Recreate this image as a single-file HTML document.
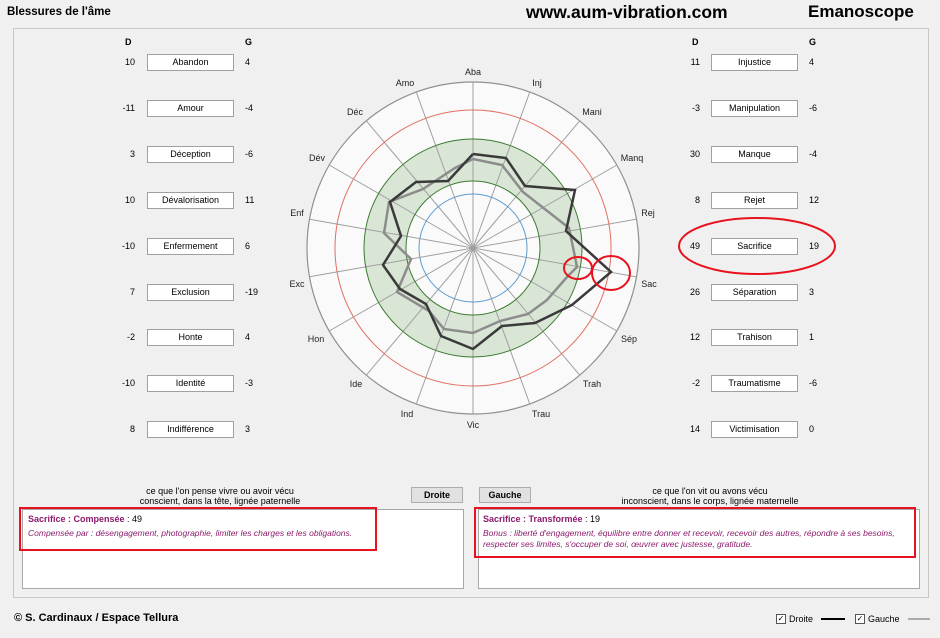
<!DOCTYPE html>
<html><head><meta charset="utf-8"><style>
*{margin:0;padding:0;box-sizing:border-box}
body{width:940px;height:638px;background:#f0f0f0;font-family:"Liberation Sans",Arial,sans-serif;color:#000;position:relative;overflow:hidden;font-size:9px}
.a{position:absolute;white-space:nowrap}
.b{font-weight:bold}
.box{position:absolute;width:87px;height:17px;background:#fff;border:1px solid #a0a0a0;text-align:center;line-height:15px;font-size:9px}
.dn{position:absolute;width:30px;text-align:right;font-size:9px}
.gn{position:absolute;font-size:9px}
.panel{position:absolute;left:13px;top:28px;width:916px;height:570px;border:1px solid #c8c8c8}
.ta{position:absolute;background:#fff;border:1px solid #a8a8a8}
.btn{position:absolute;height:16px;background:#e1e1e1;border:1px solid #adadad;font-size:9px;font-weight:bold;text-align:center;line-height:14px}
.red{position:absolute;border:2px solid #e8121e}
.p{color:#8b1a6b}
</style></head><body>
<div class="a b" style="left:7px;top:6px;font-size:11.5px">Blessures de l'âme</div>
<div class="a b" style="left:526px;top:2px;font-size:17.5px">www.aum-vibration.com</div>
<div class="a b" style="left:808px;top:2px;font-size:17px">Emanoscope</div>
<div class="panel"></div>

<div class="a b" style="left:125px;top:37px">D</div>
<div class="a b" style="left:245px;top:37px">G</div>
<div class="a b" style="left:692px;top:37px">D</div>
<div class="a b" style="left:809px;top:37px">G</div>

<div class="dn" style="left:105px;top:57px">10</div><div class="box" style="left:147px;top:54px">Abandon</div><div class="gn" style="left:245px;top:57px">4</div>
<div class="dn" style="left:105px;top:103px">-11</div><div class="box" style="left:147px;top:100px">Amour</div><div class="gn" style="left:245px;top:103px">-4</div>
<div class="dn" style="left:105px;top:149px">3</div><div class="box" style="left:147px;top:146px">Déception</div><div class="gn" style="left:245px;top:149px">-6</div>
<div class="dn" style="left:105px;top:195px">10</div><div class="box" style="left:147px;top:192px">Dévalorisation</div><div class="gn" style="left:245px;top:195px">11</div>
<div class="dn" style="left:105px;top:241px">-10</div><div class="box" style="left:147px;top:238px">Enfermement</div><div class="gn" style="left:245px;top:241px">6</div>
<div class="dn" style="left:105px;top:287px">7</div><div class="box" style="left:147px;top:284px">Exclusion</div><div class="gn" style="left:245px;top:287px">-19</div>
<div class="dn" style="left:105px;top:332px">-2</div><div class="box" style="left:147px;top:329px">Honte</div><div class="gn" style="left:245px;top:332px">4</div>
<div class="dn" style="left:105px;top:378px">-10</div><div class="box" style="left:147px;top:375px">Identité</div><div class="gn" style="left:245px;top:378px">-3</div>
<div class="dn" style="left:105px;top:424px">8</div><div class="box" style="left:147px;top:421px">Indifférence</div><div class="gn" style="left:245px;top:424px">3</div>

<div class="dn" style="left:670px;top:57px">11</div><div class="box" style="left:711px;top:54px">Injustice</div><div class="gn" style="left:809px;top:57px">4</div>
<div class="dn" style="left:670px;top:103px">-3</div><div class="box" style="left:711px;top:100px">Manipulation</div><div class="gn" style="left:809px;top:103px">-6</div>
<div class="dn" style="left:670px;top:149px">30</div><div class="box" style="left:711px;top:146px">Manque</div><div class="gn" style="left:809px;top:149px">-4</div>
<div class="dn" style="left:670px;top:195px">8</div><div class="box" style="left:711px;top:192px">Rejet</div><div class="gn" style="left:809px;top:195px">12</div>
<div class="dn" style="left:670px;top:241px">49</div><div class="box" style="left:711px;top:238px">Sacrifice</div><div class="gn" style="left:809px;top:241px">19</div>
<div class="dn" style="left:670px;top:287px">26</div><div class="box" style="left:711px;top:284px">Séparation</div><div class="gn" style="left:809px;top:287px">3</div>
<div class="dn" style="left:670px;top:332px">12</div><div class="box" style="left:711px;top:329px">Trahison</div><div class="gn" style="left:809px;top:332px">1</div>
<div class="dn" style="left:670px;top:378px">-2</div><div class="box" style="left:711px;top:375px">Traumatisme</div><div class="gn" style="left:809px;top:378px">-6</div>
<div class="dn" style="left:670px;top:424px">14</div><div class="box" style="left:711px;top:421px">Victimisation</div><div class="gn" style="left:809px;top:424px">0</div>

<svg class="a" style="left:0;top:0" width="940" height="638">
<ellipse cx="757" cy="246" rx="78" ry="28" fill="none" stroke="#e8121e" stroke-width="2"/>
<g transform="translate(473,248)">
<circle r="166" fill="#fafafa" stroke="#909090" stroke-width="1.2"/>
<circle r="109" fill="#d9e6d6"/>
<circle r="67" fill="#fafafa"/>
<g stroke="#a0a0a0" stroke-width="1">
<line x1="0" y1="0" x2="0" y2="-166"/><line x1="0" y1="0" x2="56.8" y2="-156"/><line x1="0" y1="0" x2="106.7" y2="-127.2"/><line x1="0" y1="0" x2="143.8" y2="-83"/><line x1="0" y1="0" x2="163.5" y2="-28.8"/><line x1="0" y1="0" x2="163.5" y2="28.8"/><line x1="0" y1="0" x2="143.8" y2="83"/><line x1="0" y1="0" x2="106.7" y2="127.2"/><line x1="0" y1="0" x2="56.8" y2="156"/><line x1="0" y1="0" x2="0" y2="166"/><line x1="0" y1="0" x2="-56.8" y2="156"/><line x1="0" y1="0" x2="-106.7" y2="127.2"/><line x1="0" y1="0" x2="-143.8" y2="83"/><line x1="0" y1="0" x2="-163.5" y2="28.8"/><line x1="0" y1="0" x2="-163.5" y2="-28.8"/><line x1="0" y1="0" x2="-143.8" y2="-83"/><line x1="0" y1="0" x2="-106.7" y2="-127.2"/><line x1="0" y1="0" x2="-56.8" y2="-156"/>
</g>
<circle r="138" fill="none" stroke="#e07060" stroke-width="1"/>
<circle r="109" fill="none" stroke="#3a7a30" stroke-width="1"/>
<circle r="67" fill="none" stroke="#3a7a30" stroke-width="1"/>
<circle r="54" fill="none" stroke="#5a9ad0" stroke-width="1"/>
</g>
<polyline fill="none" stroke="#8c8c8c" stroke-width="2.5" points="473,159 502,165 523,192 569,228 575,257 577,267 567,277 547,300 528,314 500,321 473,333 444,329 429,311 397,292 411,259 384,233 389,202 423,189 455,168 473,159"/>
<polyline fill="none" stroke="#3a3a3a" stroke-width="2.5" points="473,154 506,158 525,186 575,190 566,231 611,272 572,305 535,323 502,326 473,349 441,336 426,304 400,289 383,265 401,236 390,202 416,182 448,181 473,154"/>
<g font-family="Liberation Sans,Arial,sans-serif" font-size="9" text-anchor="middle" fill="#222">
<text x="473" y="75">Aba</text><text x="537" y="86">Inj</text><text x="592" y="115">Mani</text><text x="632" y="161">Manq</text><text x="648" y="216">Rej</text><text x="649" y="287">Sac</text><text x="629" y="342">Sép</text><text x="592" y="387">Trah</text><text x="541" y="417">Trau</text><text x="473" y="428">Vic</text><text x="407" y="417">Ind</text><text x="356" y="387">Ide</text><text x="316" y="342">Hon</text><text x="297" y="287">Exc</text><text x="297" y="216">Enf</text><text x="317" y="161">Dév</text><text x="355" y="115">Déc</text><text x="405" y="86">Amo</text>
</g>
<ellipse cx="578" cy="268" rx="14" ry="11" fill="none" stroke="#e8121e" stroke-width="2"/>
<ellipse cx="611" cy="273" rx="19" ry="17" fill="none" stroke="#e8121e" stroke-width="2"/>
</svg>

<div class="a" style="left:130px;top:486px;width:180px;text-align:center;font-size:9px;line-height:10px">ce que l'on pense vivre ou avoir vécu<br>conscient, dans la tête, lignée paternelle</div>
<div class="a" style="left:615px;top:486px;width:190px;text-align:center;font-size:9px;line-height:10px">ce que l'on vit ou avons vécu<br>inconscient, dans le corps, lignée maternelle</div>
<div class="btn" style="left:411px;top:487px;width:52px">Droite</div>
<div class="btn" style="left:479px;top:487px;width:52px">Gauche</div>

<div class="ta" style="left:22px;top:509px;width:442px;height:80px"></div>
<div class="ta" style="left:478px;top:509px;width:442px;height:80px"></div>
<div class="red" style="left:19px;top:507px;width:358px;height:44px"></div>
<div class="red" style="left:474px;top:507px;width:442px;height:51px"></div>
<div class="a" style="left:28px;top:514px;font-size:9px"><span class="p b">Sacrifice : Compensée</span> : 49</div>
<div class="a p" style="left:28px;top:528px;font-size:8.5px;font-style:italic">Compensée par : désengagement, photographie, limiter les charges et les obligations.</div>
<div class="a" style="left:483px;top:514px;font-size:9px"><span class="p b">Sacrifice : Transformée</span> : 19</div>
<div class="a p" style="left:483px;top:528px;font-size:8.5px;font-style:italic;line-height:11px">Bonus : liberté d'engagement, équilibre entre donner et recevoir, recevoir des autres, répondre à ses besoins,<br>respecter ses limites, s'occuper de soi, œuvrer avec justesse, gratitude.</div>

<div class="a b" style="left:14px;top:612px;font-size:11px">© S. Cardinaux / Espace Tellura</div>
<div class="a" style="left:776px;top:614px;width:10px;height:10px;border:1px solid #555;background:#fff;font-size:8px;line-height:8px;text-align:center">✓</div>
<div class="a" style="left:789px;top:614px;font-size:9px">Droite</div>
<div class="a" style="left:821px;top:618px;width:24px;height:2px;background:#000"></div>
<div class="a" style="left:855px;top:614px;width:10px;height:10px;border:1px solid #555;background:#fff;font-size:8px;line-height:8px;text-align:center">✓</div>
<div class="a" style="left:868px;top:614px;font-size:9px">Gauche</div>
<div class="a" style="left:908px;top:618px;width:22px;height:2px;background:#aaa"></div>
</body></html>
